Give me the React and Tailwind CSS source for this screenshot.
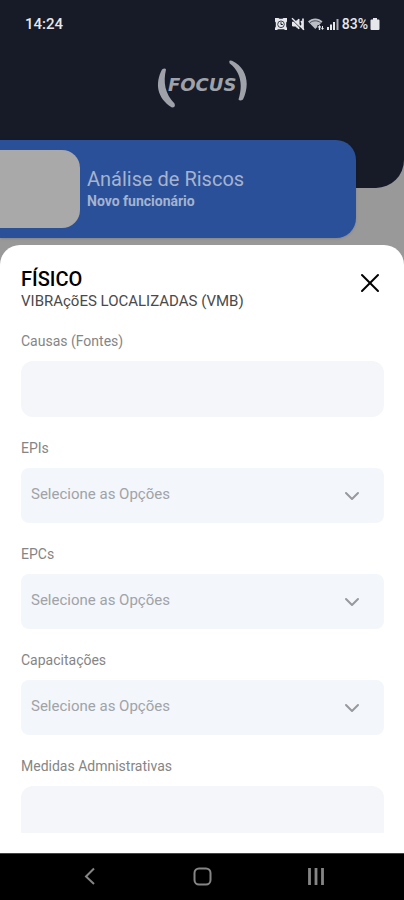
import { useState } from 'react'
import { X, ChevronDown } from 'lucide-react'

const fields = [
    { id: 'causas', label: 'Causas (Fontes)', type: 'text' },
    { id: 'epis', label: 'EPIs', type: 'select' },
    { id: 'epcs', label: 'EPCs', type: 'select' },
    { id: 'capacitacoes', label: 'Capacitações', type: 'select' },
    { id: 'medidas', label: 'Medidas Admnistrativas', type: 'text' },
]

function StatusBar() {
    return (
        <div className="flex items-center justify-between pt-3 pl-[25px] pr-6 text-gray-200">
            <span className="text-[15px] leading-6 font-medium">14:24</span>
            <div className="flex items-center gap-[3px]">
                {/* alarm */}
                <svg className="h-3.5 w-3.5" viewBox="0 0 14 14" fill="none">
                    <path d="M1 1h3.500l1 .8h3l1-.8H13v3.500l-.8 1v4l.8 1.500v2h-2l-1-.8H4l-1 .8H1v-2l.8-1.500v-4l-.8-1z" fill="currentColor" />
                    <circle cx="7" cy="7.300" r="3.300" stroke="#171b28" strokeWidth=".8" />
                    <path d="M7 5.300v2.200h1.800" stroke="#171b28" strokeWidth="1" />
                </svg>
                {/* muted */}
                <svg className="h-3.5 w-3.5" viewBox="0 0 14 14" fill="none" stroke="currentColor">
                    <path d="M1.500 5h2.800L8 2v10L4.300 9H1.500z" fill="currentColor" />
                    <path d="M10 4c1.500 1.800 1.500 4.200 0 6M12 1.500v11" strokeWidth="1.700" />
                    <path d="M1 2.500l10.500 10.500" stroke="#171b28" strokeWidth="1" />
                    <path d="M1 1.200l12 11.500" strokeWidth="1.400" />
                </svg>
                {/* wifi */}
                <svg className="h-3.5 w-4" viewBox="0 0 16 14" fill="currentColor">
                    <path d="M0 4.500C4 .5 10.500.5 14.500 4.500L7.300 12z" opacity=".8" />
                    <path d="M2 5.700c3-2.500 7.600-2.500 10.600 0" fill="none" stroke="#171b28" strokeWidth=".7" />
                    <path d="M9.500 8h6.500v6H9.500z" fill="#171b28" />
                    <path d="M11.500 8l2 2.500h-1.300V13h-1.400v-2.500H9.500zM14.500 13l-1.500-2h1V9h1v2h1z" />
                </svg>
                {/* signal */}
                <svg className="h-3.5 w-3" viewBox="0 0 12 14" fill="currentColor">
                    <path d="M0 10h2v3H0zM3 7.500h2V13H3zM6 5h2v8H6z" />
                    <path d="M9.500 2h2v11h-2z" opacity=".7" />
                </svg>
                <div className="flex items-center gap-0.5">
                    <span className="text-sm leading-6 font-medium">83%</span>
                    <svg className="h-3.5 w-2.5" viewBox="0 0 10 14" fill="currentColor">
                        <path d="M3 1h4v1.500h1.500q1 0 1 1V12q0 1-1 1h-7q-1 0-1-1V3.500q0-1 1-1H3z" />
                    </svg>
                </div>
            </div>
        </div>
    )
}

function Logo() {
    return (
        <svg className="h-12 w-24" viewBox="0 0 96 48" fill="#9fa2a9" role="img" aria-label="Focus">
            <path d="M8 9.500Q11 7.500 12 9.500C9 22 11 34 20.500 43.500Q22 47.500 18 47.500C2.500 38 1 23 8 9.500z" />
            <path d="M75.500 2.500Q74.500-.5 78 .8C93.500 8 96 25 89 39.500Q86 41.500 84.500 39.500C89 25 87 12 75.500 3.300z" />
            <text x="14" y="31" fontFamily="DejaVu Sans, sans-serif" fontSize="18" fontWeight="700" fontStyle="italic">FOCUS</text>
        </svg>
    )
}

function Field({ field }) {
    const [value, setValue] = useState('')

    return (
        <div className="flex flex-col gap-2.5">
            <label htmlFor={field.id} className="text-sm leading-5 text-[#858585]">
                {field.label}
            </label>
            {field.type === 'text' ? (
                <input
                    id={field.id}
                    type="text"
                    value={value}
                    onChange={(e) => setValue(e.target.value)}
                    className="h-14 w-full rounded-xl bg-[#f4f6fa] px-2.5 text-[15px] text-gray-700 outline-none"
                />
            ) : (
                <div className="relative">
                    <select
                        id={field.id}
                        value={value}
                        onChange={(e) => setValue(e.target.value)}
                        className="block h-[55px] w-full appearance-none rounded-lg bg-[#f3f6fa] pl-2.5 pr-12 pb-0.5 text-[15px] text-[#a0a3a8] outline-none"
                    >
                        <option value="">Selecione as Opções</option>
                    </select>
                    <ChevronDown className="pointer-events-none absolute inset-y-0 right-5 my-auto h-6 w-6 text-[#96999e]" strokeWidth={2} />
                </div>
            )}
        </div>
    )
}

function NavBar() {
    return (
        <nav className="grid shrink-0 grid-cols-[1fr_auto_1fr] items-center border-t border-[#444444] bg-black py-3 text-[#858585]">
            <button type="button" aria-label="Voltar" className="ml-20 justify-self-start">
                <svg className="h-[22px] w-5" viewBox="0 0 20 22" fill="none" stroke="currentColor" strokeWidth="2">
                    <path d="M14 2.500L6 10.500l8 7.500" />
                </svg>
            </button>
            <button type="button" aria-label="Início">
                <svg className="h-[22px] w-5" viewBox="0 0 20 22" fill="none" stroke="currentColor" strokeWidth="2">
                    <rect x="2.500" y="2.500" width="16" height="16" rx="4.500" />
                </svg>
            </button>
            <button type="button" aria-label="Recentes" className="mr-[78px] justify-self-end">
                <svg className="h-[22px] w-5" viewBox="0 0 20 22" fill="none" stroke="currentColor" strokeWidth="2.800">
                    <path d="M3.500 2v17M10 2v17M16.500 2v17" />
                </svg>
            </button>
        </nav>
    )
}

export default function App() {
    const [open, setOpen] = useState(true)

    return (
        <div className="flex h-screen flex-col overflow-hidden bg-[#999999] font-['Roboto',sans-serif]">
            <header className="flex shrink-0 flex-col rounded-br-[28px] bg-[#171b28] pb-20">
                <StatusBar />
                <div className="flex justify-center pt-6">
                    <Logo />
                </div>
            </header>

            <section className="-mt-12 mr-12 flex shrink-0 items-center gap-[7px] rounded-r-[20px] bg-[#2a509a] py-2.5 shadow-sm">
                <div className="h-[78px] w-20 rounded-r-[18px] bg-[#a9a9a9]" />
                <div>
                    <h1 className="text-xl leading-6 text-[#a5b3ce]">Análise de Riscos</h1>
                    <p className="text-sm leading-5 font-bold text-[#a5b3ce]">Novo funcionário</p>
                </div>
            </section>

            <main className="mt-[7px] flex min-h-0 flex-1 flex-col">
                {open && (
                    <div role="dialog" aria-labelledby="risk-title" className="flex min-h-0 flex-1 flex-col rounded-t-[20px] bg-white pt-[22px] pr-5 pb-5 pl-[21px]">
                        <div className="flex items-start justify-between pb-5">
                            <div>
                                <h2 id="risk-title" className="text-xl leading-6 font-medium text-black">FÍSICO</h2>
                                <p className="text-[15px] leading-5 text-[#4a4a4a]">VIBRAçõES LOCALIZADAS (VMB)</p>
                            </div>
                            <button type="button" aria-label="Fechar" onClick={() => setOpen(false)} className="-mr-0.5">
                                <X className="h-8 w-8 text-black" strokeWidth={1.5} />
                            </button>
                        </div>
                        <form className="flex min-h-0 flex-1 flex-col gap-[21px] overflow-y-auto [scrollbar-width:none]">
                            {fields.map((field) => (
                                <Field key={field.id} field={field} />
                            ))}
                        </form>
                    </div>
                )}
            </main>

            <NavBar />
        </div>
    )
}
